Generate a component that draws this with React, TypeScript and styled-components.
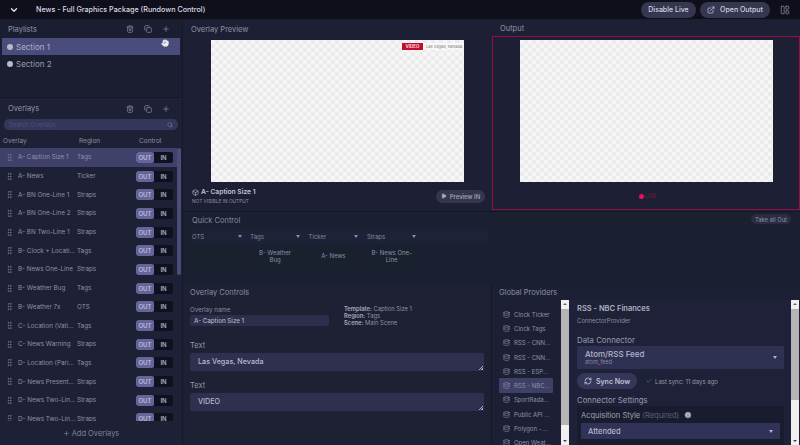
import React from "react";
import styled, { createGlobalStyle } from "styled-components";
import { ChevronDown, Trash2, Copy, Plus, Search, GripVertical, Database, RefreshCw, Check, Info, Play, ExternalLink, LayoutPanelLeft, Box, Hand } from "lucide-react";

const Global = createGlobalStyle`
  html, body { margin: 0; padding: 0; background: #141626; }
  * { box-sizing: border-box; }
`;

const Page = styled.div`
  width: 800px; height: 445px; overflow: hidden; position: relative;
  display: grid;
  grid-template-columns: 182px 1fr;
  grid-template-rows: 19px 1fr;
  background: #161a2a;
  font-family: Inter, "Liberation Sans", sans-serif;
  color: #a9abc0;
  font-size: 7px;
`;
const TopBar = styled.header`
  grid-column: 1 / 3;
  display: flex; align-items: center;
  background: #0e0f1b;
  padding: 0 10px 0 9px;
`;
const TopTitle = styled.span`
  margin-left: 17px; font-size: 7.2px; font-weight: 500; color: #dcdce6; flex: 1;
`;
const PillButton = styled.button<{ $w: number }>`
  width: ${p => p.$w}px; height: 16px; border: 0; border-radius: 8px; background: #34374f; color: #d4d5e2;
  font: 500 7px Inter, sans-serif; display: flex; align-items: center; justify-content: center; gap: 5px;
  padding: 0; margin-right: 4px;
`;
const LayoutIcon = styled.span`
  display: flex; margin-left: 6px; color: #7f8197;
`;
const Sidebar = styled.aside`
  display: grid; grid-template-rows: 78px 1fr; background: #1b1e30; min-height: 0;
`;
const PanelHead = styled.div<{ $h?: number; $pt?: number }>`
  height: ${p => p.$h ?? 19}px; display: flex; align-items: center; padding: ${p => p.$pt ?? 0}px 12px 0 8px;
  font-size: 7.5px; color: #8f91a6; gap: 10px; flex-shrink: 0;
`;
const HeadTitle = styled.span`flex: 1;`;
const PlaylistPanel = styled.section`
  background: #1b1e30; padding-bottom: 0;
`;
const SectionRow = styled.div<{ $on?: boolean }>`
  height: 17px; margin: 0 2px; display: flex; align-items: center; gap: 3px; padding-left: 5px;
  font-size: 8px; color: ${p => (p.$on ? "#b0b1cc" : "#9a9cae")};
  background: ${p => (p.$on ? "#4a4c7c" : "transparent")};
`;
const Dot = styled.i`
  width: 6px; height: 6px; border-radius: 50%; background: #b9bac8; display: block;
`;
const OverlaysPanel = styled.section`
  border-top: 1px solid #15172a; background: #1e2135; display: flex; flex-direction: column; min-height: 0; position: relative;
`;
const SearchBox = styled.div`
  height: 11px; margin: 0 4px; background: #34365a; border-radius: 5px; display: flex; align-items: center;
  justify-content: space-between; padding: 0 5px; font-size: 6px; color: #4f5180; flex-shrink: 0;
`;
const ColHead = styled.div`
  display: grid; grid-template-columns: 76px 60px 1fr; padding: 5px 0 2px 3px; font-size: 6.5px; color: #8a8ca2; height: 18px;
  align-items: center; flex-shrink: 0;
`;
const ListClip = styled.div`
  height: 273px; overflow: hidden; position: relative; flex-shrink: 0;
`;
const Row = styled.div<{ $on?: boolean }>`
  height: 18.7px; display: grid; grid-template-columns: 18px 59px 59px 37px; align-items: center; margin-right: 5px;
  background: ${p => (p.$on ? "#40416a" : "transparent")}; color: #8e90a6; font-size: 6.3px;
`;
const Grip = styled.span`display: flex; justify-content: center; color: #7a7c92;`;
const RowName = styled.span`white-space: nowrap;`;
const Toggle = styled.div`
  display: grid; grid-template-columns: 18px 19px; height: 11px; border-radius: 2px; overflow: hidden; background: #101120;
  font-size: 6px; font-weight: 500; text-align: center; line-height: 11px; color: #c0c1cf;
`;
const ToggleOut = styled.span`background: #65659b; color: #c9c9de; border-radius: 2px;`;
const ScrollThumb = styled.div`
  position: absolute; right: 1px; top: 0; width: 4px; height: 127px; background: #4b4d78; border-radius: 2px;
`;
const AddRow = styled.div`
  flex: 1; display: flex; align-items: center; justify-content: center; gap: 2px; color: #7f8198; font-size: 7.5px;
`;
const Main = styled.main`
  display: grid; grid-template-columns: 310px 308px; grid-template-rows: 192px 74px 160px; min-height: 0;
`;
const PreviewPanel = styled.section`
  background: #1d2034; display: flex; flex-direction: column; border-left: 1px solid #15172a;
`;
const Checker = styled.div`
  width: 253px; height: 142px; position: relative; flex-shrink: 0;
  background-color: #f6f6f6;
  background-image: conic-gradient(#ececec 25%, transparent 0 50%, #ececec 0 75%, transparent 0);
  background-size: 8px 8px;
`;
const Stage = styled.div`display: flex; justify-content: center; padding-top: 2px;`;
const Tag = styled.div`
  position: absolute; top: 3px; right: 0; width: 62px; height: 7px; background: #f8f8f8; display: flex; align-items: center;
`;
const TagRed = styled.span`
  background: #c40d2e; color: #f4d8dc; font-size: 4.5px; font-weight: 700; padding: 0 3.5px; height: 7px; line-height: 7px;
`;
const TagText = styled.span`color: #777; font-size: 4px; margin-left: 3px;`;
const PreviewFoot = styled.div`
  display: flex; align-items: center; justify-content: space-between; padding: 6px 7px 0 9px;
`;
const FootName = styled.div`
  display: flex; align-items: center; gap: 2px; font-size: 6.7px; font-weight: 600; color: #c4c5d4;
`;
const FootSub = styled.div`font-size: 4.8px; color: #8d8fa4; margin-top: 2px;`;
const PreviewBtn = styled.button`
  width: 49px; height: 13px; border: 0; border-radius: 6.5px; background: #33364d; color: #a6a8bb; display: flex; align-items: center; justify-content: center; gap: 3px;
  font: 500 6px Inter, sans-serif; padding: 0;
`;
const OutputPanel = styled.section`background: #1d2034; display: flex; flex-direction: column;`;
const OutputFrame = styled.div`
  flex: 1; border: 1px solid #96103f; display: flex; flex-direction: column; align-items: center;
  padding-top: 3px; margin-bottom: 1px;
`;
const Live = styled.div`
  display: flex; align-items: center; gap: 1px; margin-top: 11px; margin-left: 3px; color: #7b1a48; font-size: 5.5px;
`;
const LiveDot = styled.i`width: 5px; height: 5px; border-radius: 50%; background: #ec0f60; display: block;`;
const QuickPanel = styled.section`
  grid-column: 1 / 3; background: #1b2031; position: relative; border-top: 1px solid #15172a; border-left: 1px solid #15172a;
  padding-left: 9px;
`;
const QuickTitle = styled.div`height: 16px; display: flex; align-items: center; font-size: 7.5px; color: #878a9f;`;
const TakeOut = styled.button`
  position: absolute; right: 9px; top: 2px; height: 10px; border: 0; border-radius: 5px; background: #2a2c42; color: #8f91a5;
  font: 400 5.8px Inter, sans-serif; padding: 0 4px;
`;
const QuickCols = styled.div`
  background: #1e2236; width: 296px; height: 16px;
  position: absolute; left: 9px; top: 16px; z-index: 0;
`;
const QuickGrid = styled.div`display: flex; gap: 8.8px; position: relative; z-index: 1;`;
const QuickCol = styled.div`width: 49.5px; display: flex; flex-direction: column;`;
const QuickHead = styled.div`
  height: 16px; display: flex; align-items: center; justify-content: space-between; font-size: 6px; color: #858799;
`;
const Caret = styled.i<{ $c?: string }>`
  display: block; width: 0; height: 0; border: 2px solid transparent; border-top: 3px solid ${p => p.$c ?? "#8a8ca0"}; border-bottom: 0;
`;
const QuickCard = styled.div`
  height: 24px; background: #18212e; display: flex; align-items: center; justify-content: center; text-align: center;
  font-size: 6px; line-height: 7.5px; color: #8d90a4; padding: 0 4px; border-radius: 1px;
`;
const ControlsPanel = styled.section`
  background: #1e2033; border-left: 1px solid #15172a; border-right: 1px solid #14162a; padding: 0 7px;
`;
const CtrlTitle = styled.div`height: 15px; display: flex; align-items: center; font-size: 7.5px; color: #8a8ca1;`;
const NameRow = styled.div`display: grid; grid-template-columns: 154px 1fr; height: 31px; padding-top: 6px;`;
const SmallLabel = styled.div`font-size: 6.2px; color: #8c8ea3; margin-bottom: 2px;`;
const NameInput = styled.div`
  width: 139px; height: 11px; background: #2c2e4b; border-radius: 2px; padding-left: 4px; font-size: 6.2px; font-weight: 500; line-height: 11px; color: #b4b5c8;
`;
const Meta = styled.div`font-size: 5.8px; line-height: 7px; color: #8f91a5; margin-top: -1px;`;
const MetaKey = styled.b`font-weight: 600; color: #a9abbc;`;
const FieldLabel = styled.div`font-size: 7.5px; color: #9496a9; height: 11px; margin: 9px 0 2px; line-height: 11px;`;
const TextArea = styled.div`
  width: 294px; height: 18px; background: #2f3050; border-radius: 2px; padding-left: 8px; font-size: 7.2px; font-weight: 500;
  line-height: 17px; color: #b8b9cb; position: relative;
`;
const Resizer = styled.span`
  position: absolute; right: 1px; bottom: 1px; width: 4px; height: 4px;
  background: linear-gradient(135deg, transparent 50%, #a8a9bb 50%, #a8a9bb 60%, transparent 60%, transparent 75%, #a8a9bb 75%);
`;
const ProvidersPanel = styled.section`background: #1c2034; display: flex; flex-direction: column; min-height: 0;`;
const ProvTitle = styled.div`height: 15px; display: flex; align-items: center; padding-left: 7px; font-size: 7.5px; color: #8a8ca1; flex-shrink: 0;`;
const ProvBody = styled.div`display: grid; grid-template-columns: 69px 8px 222px 8px; flex: 1; min-height: 0; overflow: hidden;`;
const ProvList = styled.div`background: #1d2034; padding: 7px 8px 0 7px; overflow: hidden;`;
const ProvItem = styled.div<{ $on?: boolean }>`
  height: 14.3px; display: flex; align-items: center; gap: 4px; padding-left: 4px; font-size: 6px; color: #8f91a6; white-space: nowrap; border-radius: 1px;
  background: ${p => (p.$on ? "#3e4068" : "transparent")};
`;
const ScrollTrack = styled.div`background: #f0f0f0; position: relative; display: flex; flex-direction: column; align-items: center; justify-content: space-between; padding: 3px 0;`;
const ScrollBar = styled.div<{ $h: number }>`position: absolute; top: 9px; left: 0; right: 0; height: ${p => p.$h}px; background: #b5b5b8;`;
const TinyUp = styled.i`display: block; width: 0; height: 0; border: 2px solid transparent; border-bottom: 2px solid #666; border-top: 0;`;
const TinyDown = styled.i`display: block; width: 0; height: 0; border: 2px solid transparent; border-top: 2px solid #444; border-bottom: 0;`;
const Detail = styled.div`background: #1e2137; padding: 4px 7px 0 8px; overflow: hidden;`;
const DetailTitle = styled.div`font-size: 7.5px; font-weight: 600; color: #aeb0c2; line-height: 10px;`;
const DetailSub = styled.div`font-size: 6px; color: #8d8fa3; line-height: 8px; margin-top: 3px;`;
const DetailLabel = styled.div<{ $mt: number }>`font-size: 7.8px; color: #9a9cae; line-height: 10px; margin-top: ${p => p.$mt}px;`;
const Select = styled.div`
  height: 23px; background: #2f3152; margin-top: 1px; display: flex; align-items: center; justify-content: space-between; padding: 0 7px 0 8px; border-radius: 1px;
`;
const SelMain = styled.div`font-size: 8px; font-weight: 500; color: #b4b5c8; line-height: 9px;`;
const SelSub = styled.div`font-size: 5.5px; color: #85879c; line-height: 6px;`;
const SyncRow = styled.div`display: flex; align-items: center; margin-top: 4px; gap: 9px;`;
const SyncBtn = styled.button`
  width: 60px; height: 16px; border: 0; border-radius: 8px; background: #35375a; color: #c0c1d2; display: flex; align-items: center; justify-content: center; gap: 4px;
  font: 600 7px Inter, sans-serif; white-space: nowrap; padding: 0;
`;
const SyncInfo = styled.span`display: flex; align-items: center; gap: 3px; font-size: 6px; color: #9698aa;`;
const SettingsBox = styled.div`
  background: #191c2e; padding: 3px 4px 0; margin-top: 1px; height: 60px;
`;
const SetLabel = styled.div`
  font-size: 7.5px; color: #a0a2b4; display: flex; align-items: center; gap: 5px; height: 12px;
`;
const Req = styled.span`color: #5f6178; margin-left: -3px;`;
const Select2 = styled.div`
  height: 16px; background: #303258; margin-top: 2px; display: flex; align-items: center; justify-content: space-between; padding: 0 7px; font-size: 7.5px; font-weight: 500; color: #b4b5c8; border-radius: 1px;
`;
const Cursor = styled.span`position: absolute; left: 161px; top: 39px; color: #eee; display: flex;`;

const overlays: [string, string][] = [
  ["A- Caption Size 1", "Tags"], ["A- News", "Ticker"], ["A- BN One-Line 1", "Straps"], ["A- BN One-Line 2", "Straps"],
  ["A- BN Two-Line 1", "Straps"], ["B- Clock + Locati...", "Tags"], ["B- News One-Line", "Straps"], ["B- Weather Bug", "Tags"],
  ["B- Weather 7x", "OTS"], ["C- Location (Vati...", "Tags"], ["C- News Warning", "Straps"], ["D- Location (Pari...", "Tags"],
  ["D- News Present...", "Straps"], ["D- News Two-Lin...", "Straps"], ["D- News Two-Lin...", "Straps"],
];
const providers = ["Clock Ticker", "Clock Tags", "RSS - CNN...", "RSS - CNN...", "RSS - ESP...", "RSS - NBC...", "SportRada...", "Public API ...", "Polygon - ...", "Open Weat..."];
const quick: [string, string][] = [["OTS", ""], ["Tags", "B- Weather Bug"], ["Ticker", "A- News"], ["Straps", "B- News One-Line"]];

export default function App() {
  return (
    <Page>
      <Global />
      <TopBar>
        <ChevronDown size={10} color="#e8e8f0" strokeWidth={3} />
        <TopTitle>News - Full Graphics Package (Rundown Control)</TopTitle>
        <PillButton $w={55}>Disable Live</PillButton>
        <PillButton $w={70}><ExternalLink size={8} />Open Output</PillButton>
        <LayoutIcon><LayoutPanelLeft size={10} /></LayoutIcon>
      </TopBar>
      <Sidebar>
        <PlaylistPanel>
          <PanelHead $pt={1}>
            <HeadTitle>Playlists</HeadTitle>
            <Trash2 size={8} /><Copy size={8} /><Plus size={8} />
          </PanelHead>
          <SectionRow $on><Dot />Section 1</SectionRow>
          <SectionRow><Dot />Section 2</SectionRow>
        </PlaylistPanel>
        <OverlaysPanel>
          <PanelHead $h={21}>
            <HeadTitle>Overlays</HeadTitle>
            <Trash2 size={8} /><Copy size={8} /><Plus size={8} />
          </PanelHead>
          <SearchBox>Search Overlays...<Search size={6} color="#8486a0" /></SearchBox>
          <ColHead><span>Overlay</span><span>Region</span><span>Control</span></ColHead>
          <ListClip>
            {overlays.map(([n, r], i) => (
              <Row key={n + i} $on={i === 0}>
                <Grip><GripVertical size={9} /></Grip>
                <RowName>{n}</RowName>
                <span>{r}</span>
                <Toggle><ToggleOut>OUT</ToggleOut><span>IN</span></Toggle>
              </Row>
            ))}
            <ScrollThumb />
          </ListClip>
          <AddRow><Plus size={7} />Add Overlays</AddRow>
        </OverlaysPanel>
      </Sidebar>
      <Main>
        <PreviewPanel>
          <PanelHead $pt={1}>Overlay Preview</PanelHead>
          <Stage>
            <Checker>
              <Tag><TagRed>VIDEO</TagRed><TagText>Las Vegas, Nevada</TagText></Tag>
            </Checker>
          </Stage>
          <PreviewFoot>
            <div>
              <FootName><Box size={7} />A- Caption Size 1</FootName>
              <FootSub>NOT VISIBLE IN OUTPUT</FootSub>
            </div>
            <PreviewBtn><Play size={6} fill="currentColor" />Preview IN</PreviewBtn>
          </PreviewFoot>
        </PreviewPanel>
        <OutputPanel>
          <PanelHead $h={17} $pt={1}>Output</PanelHead>
          <OutputFrame>
            <Checker />
            <Live><LiveDot />LIVE</Live>
          </OutputFrame>
        </OutputPanel>
        <QuickPanel>
          <QuickTitle>Quick Control</QuickTitle>
          <TakeOut>Take all Out</TakeOut>
          <QuickCols />
          <QuickGrid>
            {quick.map(([h, c]) => (
              <QuickCol key={h}>
                <QuickHead>{h}<Caret /></QuickHead>
                <QuickCard>{c}</QuickCard>
              </QuickCol>
            ))}
          </QuickGrid>
        </QuickPanel>
        <ControlsPanel>
          <CtrlTitle>Overlay Controls</CtrlTitle>
          <NameRow>
            <div>
              <SmallLabel>Overlay name</SmallLabel>
              <NameInput>A- Caption Size 1</NameInput>
            </div>
            <Meta>
              <div><MetaKey>Template:</MetaKey> Caption Size 1</div>
              <div><MetaKey>Region:</MetaKey> Tags</div>
              <div><MetaKey>Scene:</MetaKey> Main Scene</div>
            </Meta>
          </NameRow>
          <FieldLabel>Text</FieldLabel>
          <TextArea>Las Vegas, Nevada<Resizer /></TextArea>
          <FieldLabel>Text</FieldLabel>
          <TextArea>VIDEO<Resizer /></TextArea>
        </ControlsPanel>
        <ProvidersPanel>
          <ProvTitle>Global Providers</ProvTitle>
          <ProvBody>
            <ProvList>
              {providers.map((p, i) => (
                <ProvItem key={p + i} $on={i === 5}><Database size={7} />{p}</ProvItem>
              ))}
            </ProvList>
            <ScrollTrack><TinyUp /><ScrollBar $h={116} /><TinyDown /></ScrollTrack>
            <Detail>
              <DetailTitle>RSS - NBC Finances</DetailTitle>
              <DetailSub>ConnectorProvider</DetailSub>
              <DetailLabel $mt={10}>Data Connector</DetailLabel>
              <Select>
                <div>
                  <SelMain>Atom/RSS Feed</SelMain>
                  <SelSub>atom_feed</SelSub>
                </div>
                <Caret $c="#b0b1c4" />
              </Select>
              <SyncRow>
                <SyncBtn><RefreshCw size={8} strokeWidth={2.5} />Sync Now</SyncBtn>
                <SyncInfo><Check size={6} color="#5d9c80" />Last sync: 11 days ago</SyncInfo>
              </SyncRow>
              <DetailLabel $mt={6}>Connector Settings</DetailLabel>
              <SettingsBox>
                <SetLabel>Acquisition Style <Req>(Required)</Req><Info size={8} fill="#c0c1d0" color="#1b1e30" /></SetLabel>
                <Select2>Attended<Caret $c="#b0b1c4" /></Select2>
              </SettingsBox>
            </Detail>
            <ScrollTrack><TinyUp /><ScrollBar $h={91} /><TinyDown /></ScrollTrack>
          </ProvBody>
        </ProvidersPanel>
      </Main>
      <Cursor><Hand size={8} fill="#eee" /></Cursor>
    </Page>
  );
}
